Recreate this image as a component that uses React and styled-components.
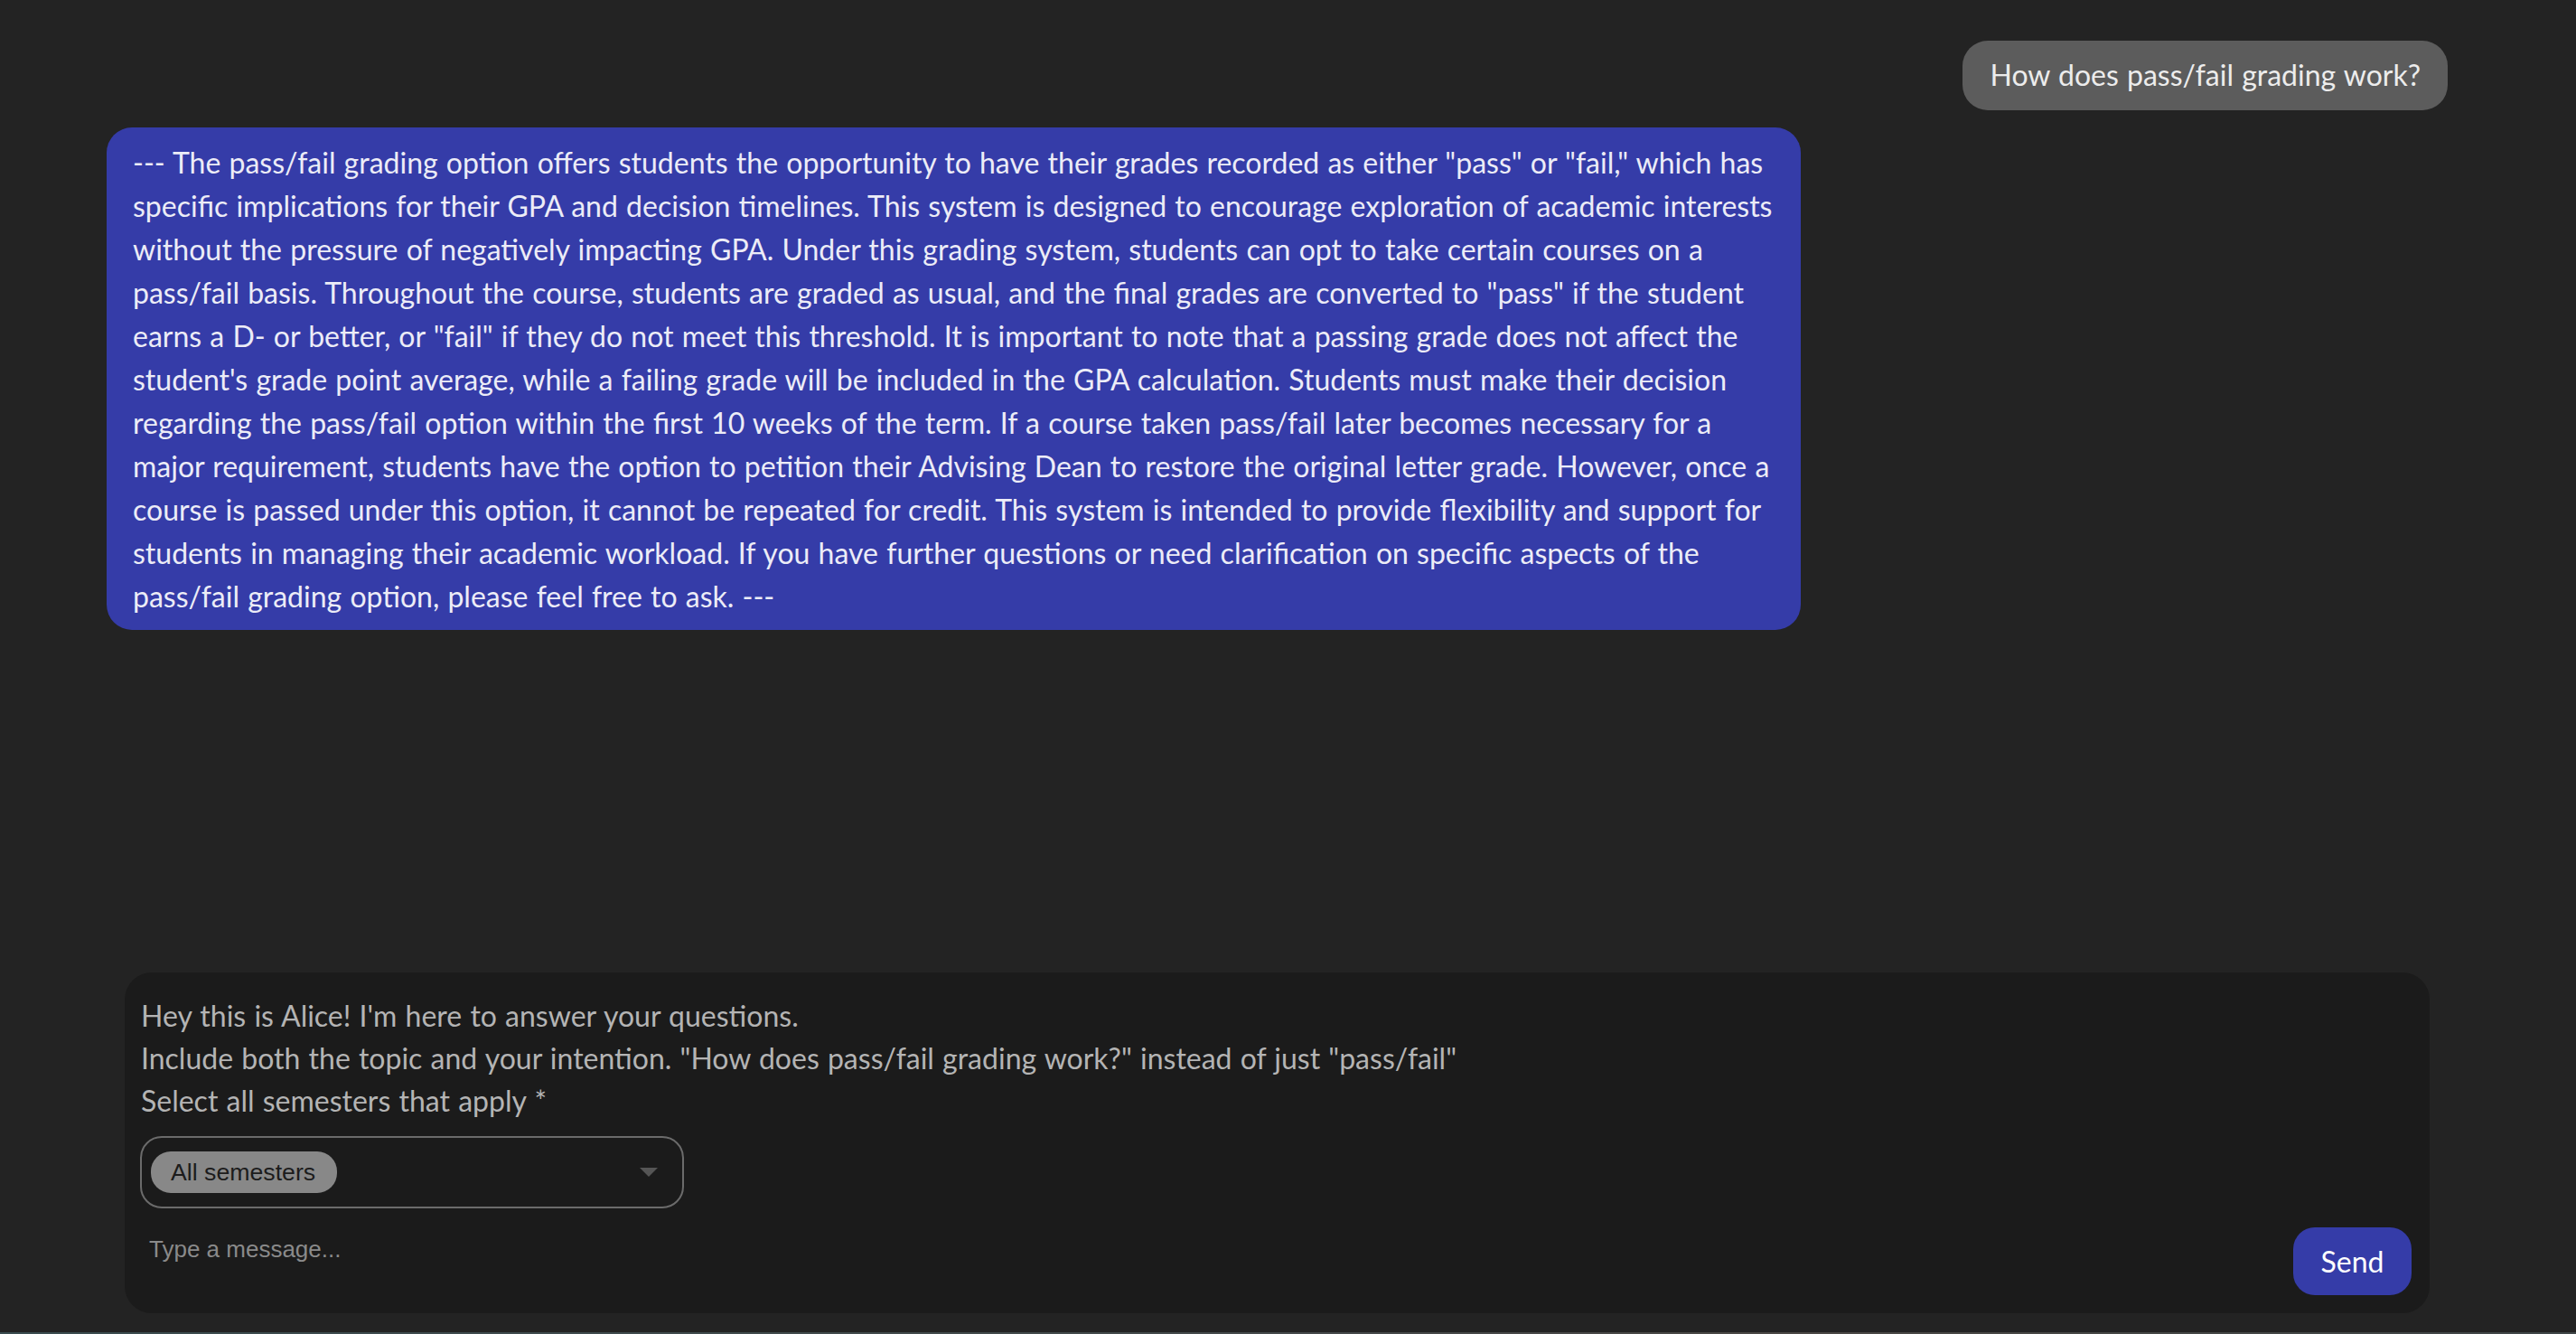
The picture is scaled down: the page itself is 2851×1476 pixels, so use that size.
import React from 'react';
import styled, { createGlobalStyle } from 'styled-components';

const GlobalStyle = createGlobalStyle`
  html, body {
    margin: 0;
    padding: 0;
    height: 100%;
    background: #232323;
  }
  #root { height: 100%; }
  *, *::before, *::after { box-sizing: border-box; }
`;

const Page = styled.div`
  height: 100vh;
  display: flex;
  flex-direction: column;
  background: #232323;
  font-family: Lato, "Segoe UI", sans-serif;
  overflow: hidden;
`;

const Thread = styled.main`
  flex: 1;
  min-height: 0;
  display: flex;
  flex-direction: column;
  gap: 19px;
  padding: 45px 142px 0 118px;
`;

const Bubble = styled.div`
  align-self: ${(p) => (p.$from === 'user' ? 'flex-end' : 'flex-start')};
  width: ${(p) => (p.$from === 'user' ? 'auto' : '1875px')};
  background: ${(p) => (p.$from === 'user' ? '#5c5c5c' : '#353ca8')};
  color: ${(p) => (p.$from === 'user' ? '#ececec' : '#ececf7')};
  font-size: 32px;
  line-height: 48px;
  word-spacing: 1px;
  padding: ${(p) => (p.$from === 'user' ? '14px 30px 15px' : '15px 29px 13px')};
  border-radius: 28px;
  white-space: pre;
`;

const Composer = styled.section`
  margin: 0 162px 21px 138px;
  background: #1b1b1b;
  border-radius: 30px;
  padding: 24px 20px 20px 17px;
  display: flex;
  flex-direction: column;
`;

const Hint = styled.p`
  margin: 0;
  padding-left: 1px;
  font-size: 32px;
  line-height: 47px;
  word-spacing: 1px;
  color: #b4b4b4;
`;

const Select = styled.div`
  margin-top: 16px;
  width: 602px;
  height: 80px;
  border: 2px solid #6b6b6b;
  border-radius: 24px;
  display: flex;
  align-items: center;
  justify-content: space-between;
  padding: 0 27px 0 10px;
`;

const Chip = styled.span`
  display: inline-flex;
  align-items: center;
  height: 46px;
  padding: 0 24px 0 22px;
  border-radius: 22px;
  background: #888888;
  color: #1c1c1c;
  font-family: "Liberation Sans", Arial, sans-serif;
  font-size: 26.7px;
`;

const Caret = styled.span`
  width: 0;
  height: 0;
  border-left: 10px solid transparent;
  border-right: 10px solid transparent;
  border-top: 10px solid #555555;
`;

const InputRow = styled.div`
  margin-top: 21px;
  display: flex;
  align-items: flex-start;
  gap: 16px;
`;

const MessageInput = styled.input`
  flex: 1;
  height: 48px;
  background: transparent;
  border: none;
  outline: none;
  padding: 0 10px;
  color: #dddddd;
  font-family: "Liberation Sans", Arial, sans-serif;
  font-size: 26px;
  &::placeholder { color: #8a8a8a; }
`;

const SendButton = styled.button`
  width: 131px;
  height: 75px;
  border: none;
  border-radius: 24px;
  background: #353ca8;
  color: #ffffff;
  font-family: Lato, "Segoe UI", sans-serif;
  font-size: 32px;
  cursor: pointer;
`;

const Strip = styled.div`
  height: 2px;
  flex: none;
  background: linear-gradient(90deg, #3a4c4f, #44494a 50%, #4a4744 70%, #3f4647);
`;

const answer = [
  '--- The pass/fail grading option offers students the opportunity to have their grades recorded as either "pass" or "fail," which has',
  'specific implications for their GPA and decision timelines. This system is designed to encourage exploration of academic interests',
  'without the pressure of negatively impacting GPA. Under this grading system, students can opt to take certain courses on a',
  'pass/fail basis. Throughout the course, students are graded as usual, and the final grades are converted to "pass" if the student',
  'earns a D- or better, or "fail" if they do not meet this threshold. It is important to note that a passing grade does not affect the',
  "student's grade point average, while a failing grade will be included in the GPA calculation. Students must make their decision",
  'regarding the pass/fail option within the first 10 weeks of the term. If a course taken pass/fail later becomes necessary for a',
  'major requirement, students have the option to petition their Advising Dean to restore the original letter grade. However, once a',
  'course is passed under this option, it cannot be repeated for credit. This system is intended to provide flexibility and support for',
  'students in managing their academic workload. If you have further questions or need clarification on specific aspects of the',
  'pass/fail grading option, please feel free to ask. ---',
].join('\n');

const hints = [
  "Hey this is Alice! I'm here to answer your questions.",
  'Include both the topic and your intention. "How does pass/fail grading work?" instead of just "pass/fail"',
  'Select all semesters that apply *',
];

export default function App() {
  return (
    <Page>
      <GlobalStyle />
      <Thread>
        <Bubble $from="user">How does pass/fail grading work?</Bubble>
        <Bubble $from="bot">{answer}</Bubble>
      </Thread>
      <Composer>
        {hints.map((h) => (
          <Hint key={h}>{h}</Hint>
        ))}
        <Select>
          <Chip>All semesters</Chip>
          <Caret />
        </Select>
        <InputRow>
          <MessageInput placeholder="Type a message..." />
          <SendButton>Send</SendButton>
        </InputRow>
      </Composer>
      <Strip />
    </Page>
  );
}
